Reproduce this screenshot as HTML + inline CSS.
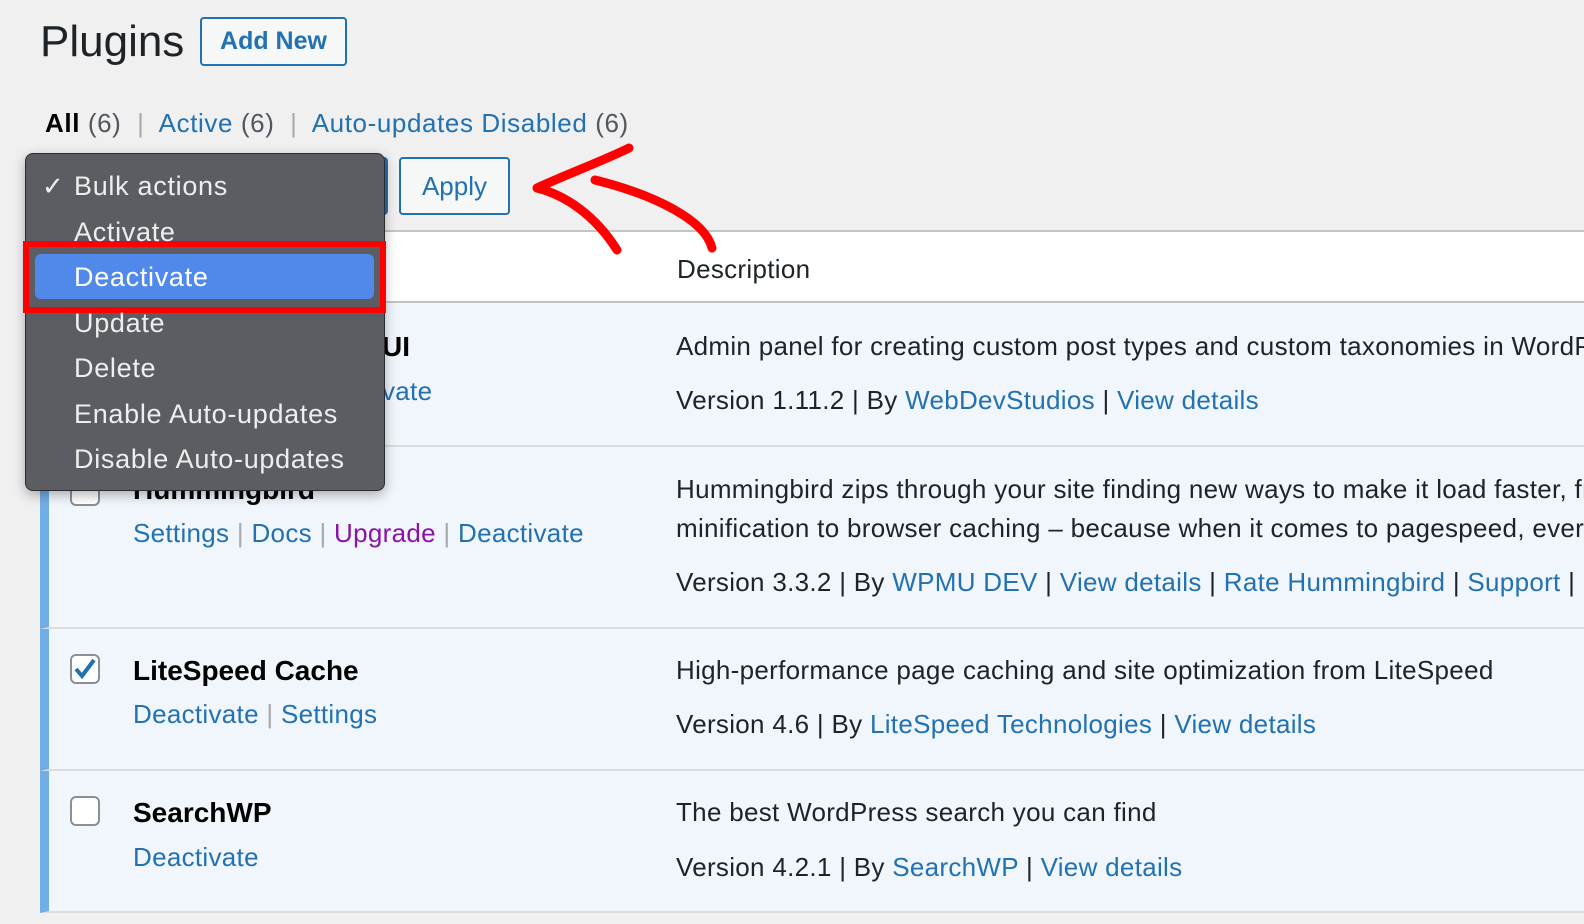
<!DOCTYPE html>
<html><head><meta charset="utf-8"><style>
body{margin:0;width:1584px;height:924px;background:#f0f0f1;font-family:"Liberation Sans",sans-serif;position:relative;overflow:hidden;color:#1d2327}
.a{position:absolute;white-space:nowrap}
.l{color:#2271b1}
.s{color:#a7aaad}
.t{font-size:26px;letter-spacing:0.3px}
.b{font-weight:bold;font-size:28px;color:#000}
.row{position:absolute;left:40px;width:1544px;background:#f0f6fc;border-bottom:2px solid #dcdcde;border-left:9px solid #72aee6;box-sizing:border-box}
.cb{position:absolute;width:30px;height:30px;border:2px solid #8c8f94;border-radius:6px;background:#fff;box-sizing:border-box}
</style></head><body>
<div class="a" style="left:40px;top:17px;font-size:44px;color:#1d2327">Plugins</div>
<div class="a" style="left:200px;top:17px;width:147px;height:49px;border:2px solid #2271b1;border-radius:4px;box-sizing:border-box;color:#2271b1;font-size:25px;font-weight:bold;text-align:center;line-height:45px;background:#f6f7f7">Add New</div>
<div class="a t" style="left:45px;top:108px;color:#50575e;letter-spacing:0.6px"><b style="color:#000">All</b> (6) <span class="s">&nbsp;|&nbsp;</span> <span class="l">Active</span> (6) <span class="s">&nbsp;|&nbsp;</span> <span class="l">Auto-updates Disabled</span> (6)</div>
<div class="a" style="left:360px;top:157px;width:28px;height:58px;background:#2271b1;border-radius:4px"></div>
<div class="a" style="left:399px;top:157px;width:111px;height:58px;border:2px solid #2271b1;border-radius:4px;box-sizing:border-box;color:#2271b1;font-size:26px;text-align:center;line-height:54px;background:#f6f7f7">Apply</div>
<div class="a" style="left:40px;top:230px;width:1544px;height:73px;background:#fff;border-top:2px solid #c3c4c7;border-bottom:2px solid #c3c4c7;box-sizing:border-box"></div>
<div class="a t" style="left:677px;top:254px;color:#1d2327">Description</div>
<div class="row" style="top:303px;height:144px"></div>
<div class="row" style="top:447px;height:182px"></div>
<div class="row" style="top:629px;height:142px"></div>
<div class="row" style="top:771px;height:142px"></div>
<div class="a b" style="left:382px;top:331px">UI</div>
<div class="a t l" style="left:382px;top:376px">vate</div>
<div class="a t" style="left:676px;top:331px">Admin panel for creating custom post types and custom taxonomies in WordPress</div>
<div class="a t" style="left:676px;top:385px">Version 1.11.2 | By <span class="l">WebDevStudios</span> | <span class="l">View details</span></div>
<div class="cb" style="left:70px;top:476px"></div>
<div class="a b" style="left:133px;top:474px">Hummingbird</div>
<div class="a t" style="left:133px;top:518px"><span class="l">Settings</span> <span class="s">|</span> <span class="l">Docs</span> <span class="s">|</span> <span style="color:#8a12a8">Upgrade</span> <span class="s">|</span> <span class="l">Deactivate</span></div>
<div class="a t" style="left:676px;top:474px">Hummingbird zips through your site finding new ways to make it load faster, from file compression and</div>
<div class="a t" style="left:676px;top:513px">minification to browser caching – because when it comes to pagespeed, every millisecond counts.</div>
<div class="a t" style="left:676px;top:567px">Version 3.3.2 | By <span class="l">WPMU DEV</span> | <span class="l">View details</span> | <span class="l">Rate Hummingbird</span> | <span class="l">Support</span> | <span class="l">Roadmap</span></div>
<div class="cb" style="left:70px;top:654px"></div>
<svg class="a" style="left:72px;top:656px" width="26" height="26" viewBox="0 0 26 26"><path d="M4 13 L10 20 L22 4" fill="none" stroke="#2271b1" stroke-width="4"/></svg>
<div class="a b" style="left:133px;top:655px">LiteSpeed Cache</div>
<div class="a t" style="left:133px;top:699px"><span class="l">Deactivate</span> <span class="s">|</span> <span class="l">Settings</span></div>
<div class="a t" style="left:676px;top:655px">High-performance page caching and site optimization from LiteSpeed</div>
<div class="a t" style="left:676px;top:709px">Version 4.6 | By <span class="l">LiteSpeed Technologies</span> | <span class="l">View details</span></div>
<div class="cb" style="left:70px;top:796px"></div>
<div class="a b" style="left:133px;top:797px">SearchWP</div>
<div class="a t l" style="left:133px;top:842px">Deactivate</div>
<div class="a t" style="left:676px;top:797px">The best WordPress search you can find</div>
<div class="a t" style="left:676px;top:852px">Version 4.2.1 | By <span class="l">SearchWP</span> | <span class="l">View details</span></div>
<div class="a" style="left:25px;top:153px;width:360px;height:338px;background:#5b5d63;border:1px solid #2c2d30;border-radius:8px;box-sizing:border-box;box-shadow:0 4px 12px rgba(0,0,0,.3)"></div>
<div class="a" style="left:35px;top:254px;width:339px;height:45px;background:#5189ea;border-radius:6px"></div>
<div class="a" style="left:23px;top:241px;width:363px;height:72px;border:6px solid #ff0000;box-sizing:border-box"></div>
<div class="a" style="left:42px;top:172px;font-size:26px;color:#eee;font-family:'DejaVu Sans',sans-serif">✓</div>
<div class="a" style="left:74px;top:164px;font-size:27px;letter-spacing:0.7px;color:#eee;line-height:45.5px">Bulk actions<br>Activate<br><span style="color:#fff">Deactivate</span><br>Update<br>Delete<br>Enable Auto-updates<br>Disable Auto-updates</div>
<svg class="a" style="left:525px;top:140px" width="200" height="120" viewBox="0 0 200 120"><path d="M187 108 C180 80 130 55 70 40 M104 8 C80 20 40 35 12 48 C40 55 70 75 92 110" fill="none" stroke="#ff0000" stroke-width="9" stroke-linecap="round" stroke-linejoin="round"/></svg>
</body></html>
